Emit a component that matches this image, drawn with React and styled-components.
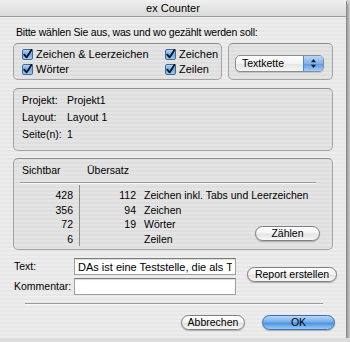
import React from 'react';
import styled, { createGlobalStyle } from 'styled-components';

const GlobalStyle = createGlobalStyle`
  html, body {
    margin: 0;
    padding: 0;
    background: #dcdcdc;
  }
  body {
    font-family: "Liberation Sans", Arial, sans-serif;
    font-size: 10.5px;
    color: #000;
  }
`;

const Window = styled.div`
  width: 346px;
  height: 338px;
  box-sizing: border-box;
  background: repeating-linear-gradient(to bottom, #ededed 0 2px, #e7e7e7 2px 4px);
  box-shadow: 1px 1px 0 #8a8a8a, 2px 3px 4px rgba(0, 0, 0, 0.45);
  display: flex;
  flex-direction: column;
  white-space: nowrap;
`;

const TitleBar = styled.div`
  height: 16px;
  line-height: 17px;
  text-align: center;
  font-size: 11px;
  background: linear-gradient(to bottom, #f0f0f0, #dadada);
  border-bottom: 1px solid #9b9b9b;
`;

const Content = styled.div`
  padding: 0 13px;
  display: flex;
  flex-direction: column;
`;

const Prompt = styled.div`
  margin-top: 8px;
  line-height: 14px;
  padding-left: 3px;
  letter-spacing: -0.2px;
`;

const Row = styled.div`
  display: flex;
  gap: 6px;
  margin-top: ${p => p.$top || 0}px;
`;

const GroupBox = styled.div`
  box-sizing: border-box;
  border: 1px solid #a3a3a3;
  border-top-color: #8f8f8f;
  border-radius: 5px;
  background: rgba(0, 0, 0, 0.035);
  height: ${p => p.$h}px;
  width: ${p => (p.$w ? `${p.$w}px` : 'auto')};
  margin-top: ${p => p.$top || 0}px;
`;

const CheckGrid = styled.div`
  display: grid;
  grid-template-columns: 143px auto;
  grid-auto-rows: 15px;
  padding: 3px 0 0 8px;
`;

const CheckItem = styled.label`
  display: flex;
  align-items: center;
  gap: 3px;
  line-height: 15px;
  font-size: 11px;
`;

const PopupWrap = styled.div`
  display: flex;
  align-items: center;
  height: 100%;
  padding: 3px 0 0 6px;
  box-sizing: border-box;
`;

const Popup = styled.div`
  width: 89px;
  height: 17px;
  box-sizing: border-box;
  border: 1px solid #8d8d8d;
  border-radius: 5px;
  overflow: hidden;
  display: flex;
  background: linear-gradient(to bottom, #ffffff, #f3f3f3 50%, #e4e4e4 51%, #f6f6f6);
  box-shadow: 0 1px 1px rgba(0, 0, 0, 0.15);
`;

const PopupLabel = styled.div`
  flex: 1;
  padding-left: 6px;
  line-height: 15px;
`;

const PopupCap = styled.div`
  width: 19px;
  display: flex;
  align-items: center;
  justify-content: center;
  border-left: 1px solid #5a86c0;
  background: linear-gradient(to bottom, #b8d6f6, #7fb1ec 50%, #5798e4 51%, #9fd0f8);
`;

const InfoGrid = styled.div`
  display: grid;
  grid-template-columns: 45px auto;
  grid-auto-rows: 17px;
  line-height: 17px;
  padding: 3px 0 0 8px;
`;

const TableHead = styled.div`
  display: flex;
  line-height: 14px;
  padding: 4px 0 0 8px;
`;

const HeadCell = styled.div`
  width: ${p => p.$w}px;
`;

const Rule = styled.div`
  height: 1px;
  background: #9a9a9a;
  border-bottom: 1px solid #f8f8f8;
  margin: ${p => p.$m};
`;

const Columns = styled.div`
  display: grid;
  grid-template-columns: 60px 57px 1fr;
  padding: 1px 12px 3px 6px;
`;

const NumCell = styled.div`
  grid-column: ${p => p.$col};
  grid-row: ${p => p.$row};
  text-align: right;
  line-height: 14.5px;
  padding-right: ${p => p.$pr || 0}px;
  border-right: ${p => (p.$line ? '1px solid #8e8e8e' : 'none')};
  padding-top: ${p => (p.$row === 1 ? 3 : 0)}px;
`;

const LabelCell = styled.div`
  grid-column: 3;
  grid-row: ${p => p.$row};
  line-height: 14.5px;
  padding-left: 7px;
  padding-top: ${p => (p.$row === 1 ? 3 : 0)}px;
`;

const PillButton = styled.div`
  box-sizing: border-box;
  width: ${p => p.$w}px;
  height: 15px;
  line-height: 13px;
  text-align: center;
  border: 1px solid #7f7f7f;
  border-radius: 8px;
  background: linear-gradient(to bottom, #ffffff, #f4f4f4 45%, #e3e3e3 55%, #f7f7f7);
  box-shadow: 0 1px 1px rgba(0, 0, 0, 0.25);
  flex-shrink: 0;
`;

const CountButton = styled(PillButton)`
  grid-column: 3;
  grid-row: 3 / span 2;
  justify-self: end;
  align-self: center;
  margin-top: 3px;
`;

const DefaultButton = styled(PillButton)`
  border-color: #3f6fae;
  background: linear-gradient(to bottom, #b6d7f7, #77aeec 45%, #4f92e3 55%, #96cdf8);
`;

const Form = styled.div`
  display: grid;
  grid-template-columns: 60px 162px auto;
  grid-template-rows: 17px 17px;
  row-gap: 3px;
  margin-top: 8px;
  padding-left: 1px;
  align-items: center;
`;

const FieldLabel = styled.div`
  line-height: 17px;
`;

const Field = styled.input`
  box-sizing: border-box;
  width: 162px;
  height: 17px;
  margin: 0;
  padding: 0 3px;
  font: 11px "Liberation Sans", Arial, sans-serif;
  color: #000;
  background: #fff;
  border: 1px solid #a0a0a0;
  border-top-color: #7a7a7a;
  box-shadow: inset 0 1px 1px rgba(0, 0, 0, 0.15);
  outline: none;
`;

const SideButton = styled.div`
  grid-column: 3;
  grid-row: 1 / span 2;
  align-self: start;
  padding: 9px 0 0 11px;
`;

const ButtonBar = styled.div`
  display: flex;
  justify-content: flex-end;
  gap: 17px;
  margin: 10px -2px 0 0;
`;

const CheckBox = () => (
  <svg width="11" height="11" viewBox="0 0 11 11">
    <defs>
      <linearGradient id="cb" x1="0" y1="0" x2="0" y2="1">
        <stop offset="0" stopColor="#b9d9f7" />
        <stop offset="0.5" stopColor="#6ea9e8" />
        <stop offset="1" stopColor="#9bd0f7" />
      </linearGradient>
    </defs>
    <rect x="0.5" y="0.5" width="10" height="10" rx="1.5" fill="url(#cb)" stroke="#3e6b9f" />
    <path d="M2.3 5.6 L4.6 8.4 L9.6 0.8" fill="none" stroke="#111" strokeWidth="1.8" strokeLinecap="round" strokeLinejoin="round" />
  </svg>
);

const Arrows = () => (
  <svg width="7" height="11" viewBox="0 0 7 11">
    <path d="M3.5 1 L6 4.2 L1 4.2 Z" fill="#1a1a1a" />
    <path d="M3.5 10 L6 6.8 L1 6.8 Z" fill="#1a1a1a" />
  </svg>
);

const rows = [
  ['428', '112', 'Zeichen inkl. Tabs und Leerzeichen'],
  ['356', '94', 'Zeichen'],
  ['72', '19', 'Wörter'],
  ['6', '', 'Zeilen'],
];

const App = () => (
  <>
    <GlobalStyle />
    <Window>
      <TitleBar>ex Counter</TitleBar>
      <Content>
        <Prompt>Bitte wählen Sie aus, was und wo gezählt werden soll:</Prompt>
        <Row $top={4}>
          <GroupBox $w={209} $h={37}>
            <CheckGrid>
              <CheckItem><CheckBox />Zeichen &amp; Leerzeichen</CheckItem>
              <CheckItem><CheckBox />Zeichen</CheckItem>
              <CheckItem><CheckBox />Wörter</CheckItem>
              <CheckItem><CheckBox />Zeilen</CheckItem>
            </CheckGrid>
          </GroupBox>
          <GroupBox $w={105} $h={37}>
            <PopupWrap>
              <Popup>
                <PopupLabel>Textkette</PopupLabel>
                <PopupCap><Arrows /></PopupCap>
              </Popup>
            </PopupWrap>
          </GroupBox>
        </Row>

        <GroupBox $h={63} $top={8}>
          <InfoGrid>
            <div>Projekt:</div><div>Projekt1</div>
            <div>Layout:</div><div>Layout 1</div>
            <div>Seite(n):</div><div>1</div>
          </InfoGrid>
        </GroupBox>

        <GroupBox $h={92} $top={7}>
          <TableHead>
            <HeadCell $w={65}>Sichtbar</HeadCell>
            <HeadCell $w={80}>Übersatz</HeadCell>
          </TableHead>
          <Rule $m="5px 16px 0 6px" />
          <Columns>
            {rows.map((r, i) => (
              <React.Fragment key={r[2]}>
                <NumCell $col={1} $row={i + 1} $line $pr={6}>{r[0]}</NumCell>
                <NumCell $col={2} $row={i + 1} $pr={1}>{r[1]}</NumCell>
                <LabelCell $row={i + 1}>{r[2]}</LabelCell>
              </React.Fragment>
            ))}
            <CountButton $w={65}>Zählen</CountButton>
          </Columns>
        </GroupBox>

        <Form>
          <FieldLabel>Text:</FieldLabel>
          <Field readOnly value="DAs ist eine Teststelle, die als Testtext dient." />
          <SideButton><PillButton $w={90}>Report erstellen</PillButton></SideButton>
          <FieldLabel>Kommentar:</FieldLabel>
          <Field readOnly value="" />
        </Form>

        <Rule $m="8px 10px 0 12px" />

        <ButtonBar>
          <PillButton $w={64}>Abbrechen</PillButton>
          <DefaultButton $w={73}>OK</DefaultButton>
        </ButtonBar>
      </Content>
    </Window>
  </>
);

export default App;
